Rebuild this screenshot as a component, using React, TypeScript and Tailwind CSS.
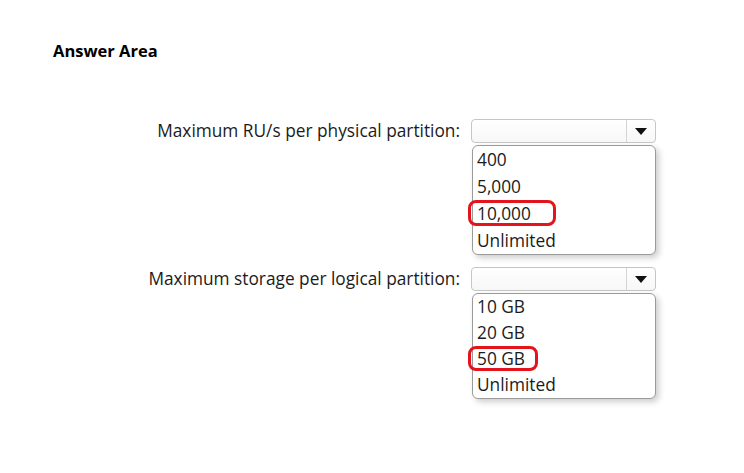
import React from 'react';

type Question = {
  label: string;
  options: string[];
  answer: string;
  rowHeight: string;
  markWidth: string;
};

const questions: Question[] = [
  {
    label: 'Maximum RU/s per physical partition:',
    options: ['400', '5,000', '10,000', 'Unlimited'],
    answer: '10,000',
    rowHeight: 'h-[27px] leading-[27px]',
    markWidth: 'w-[88px]',
  },
  {
    label: 'Maximum storage per logical partition:',
    options: ['10 GB', '20 GB', '50 GB', 'Unlimited'],
    answer: '50 GB',
    rowHeight: 'h-[26px] leading-[26px]',
    markWidth: 'w-[70px]',
  },
];

function DropdownRow({ q, first }: { q: Question; first: boolean }) {
  return (
    <div className={`flex items-start ${first ? 'mt-[57px]' : 'mt-[12px]'}`}>
      <div className="w-[460px] text-right text-[17.3px] leading-[24px] text-[#1b1b1b]">{q.label}</div>
      <div className="ml-[11px] w-[185px] flex flex-col">
        <div className="h-[24px] flex rounded-[4px] border border-[#c6c6c6] bg-gradient-to-b from-white to-[#f7f7f7]">
          <div className="flex-1" />
          <div className="w-[29px] border-l border-[#d4d4d4] flex items-center justify-center">
            <svg width="12" height="7" viewBox="0 0 12 7">
              <path d="M0 0 H12 L6 7 Z" fill="#111" />
            </svg>
          </div>
        </div>
        <div className="mt-[2px] ml-[1px] w-[184px] rounded-[6px] border border-[#9a9a9a] bg-white shadow-[3px_3px_6px_rgba(0,0,0,0.2)]">
          {q.options.map((opt) => (
            <div key={opt} className={`relative pl-[4px] text-[17.3px] text-[#1b1b1b] ${q.rowHeight}`}>
              {opt}
              {opt === q.answer && (
                <span
                  className={`absolute -left-[5px] top-0 bottom-[1px] ${q.markWidth} rounded-[8px] border-[3px] border-[#e3141c]`}
                />
              )}
            </div>
          ))}
        </div>
      </div>
    </div>
  );
}

export default function App() {
  return (
    <div className="w-[744px] h-[473px] bg-white font-['Open_Sans',sans-serif] overflow-hidden">
      <div className="pt-[40px] pl-[53px] h-[62px]">
        <h2 className="font-bold text-[16.5px] leading-[22px] text-black">Answer Area</h2>
      </div>
      {questions.map((q, i) => (
        <DropdownRow key={q.label} q={q} first={i === 0} />
      ))}
    </div>
  );
}
